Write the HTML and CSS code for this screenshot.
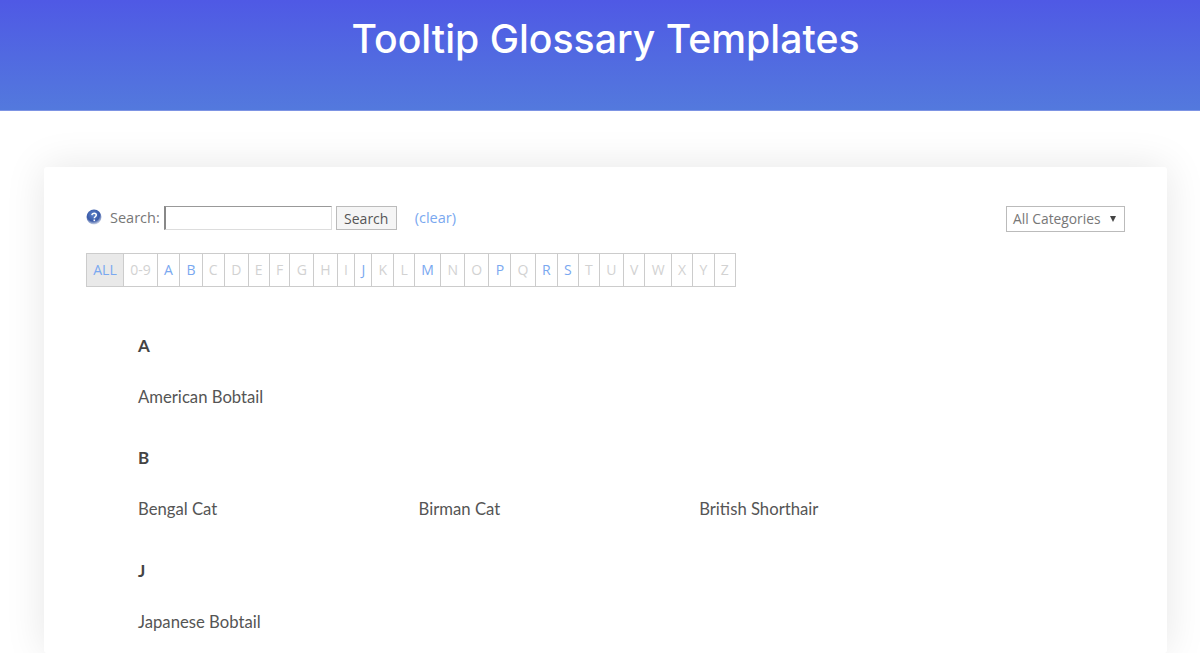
FILE: index.html
```html
<!DOCTYPE html>
<html lang="en">
<head>
  <meta charset="UTF-8">
  <title>Tooltip Glossary Templates</title>
  <link rel="stylesheet" href="styles.css">
</head>
<body>

<header class="banner">
  <h1>Tooltip Glossary Templates</h1>
</header>

<main class="card">
  <div class="toolbar">
    <form class="search">
      <svg class="help" width="16" height="16" viewBox="0 0 16 16" aria-hidden="true">
        <defs>
          <radialGradient id="helpBall" cx="45%" cy="35%" r="65%">
            <stop offset="0" stop-color="#5f86cc"/>
            <stop offset="0.65" stop-color="#3a5aa8"/>
            <stop offset="1" stop-color="#d3dae9"/>
          </radialGradient>
        </defs>
        <circle cx="8" cy="8" r="7.5" fill="url(#helpBall)"/>
        <path d="M5.8 6.2c.2-1.300 1.100-1.900 2.300-1.900 1.300 0 2.200.7 2.200 1.800 0 1.700-2 1.600-2 3.100" fill="none" stroke="#fff" stroke-width="1.500"/>
        <rect x="7.500" y="10.500" width="1.600" height="1.600" fill="#fff"/>
      </svg>
      <label class="search-label" for="q">Search:</label>
      <input class="search-input" id="q" type="text">
      <button class="search-btn" type="button">Search</button>
      <a class="clear" href="#">(clear)</a>
    </form>
    <div class="cat-select"><span class="cat-name">All Categories</span> <span class="caret"></span></div>
  </div>

  <nav class="letters">
    <span class="letter on">ALL</span>
    <span class="letter">0-9</span>
    <a class="letter has" href="#">A</a>
    <a class="letter has" href="#">B</a>
    <span class="letter">C</span>
    <span class="letter">D</span>
    <span class="letter">E</span>
    <span class="letter">F</span>
    <span class="letter">G</span>
    <span class="letter">H</span>
    <span class="letter">I</span>
    <a class="letter has" href="#">J</a>
    <span class="letter">K</span>
    <span class="letter">L</span>
    <a class="letter has" href="#">M</a>
    <span class="letter">N</span>
    <span class="letter">O</span>
    <a class="letter has" href="#">P</a>
    <span class="letter">Q</span>
    <a class="letter has" href="#">R</a>
    <a class="letter has" href="#">S</a>
    <span class="letter">T</span>
    <span class="letter">U</span>
    <span class="letter">V</span>
    <span class="letter">W</span>
    <span class="letter">X</span>
    <span class="letter">Y</span>
    <span class="letter">Z</span>
  </nav>

  <section class="group">
    <h2>A</h2>
    <div class="terms">
      <a href="#">American Bobtail</a>
    </div>
  </section>

  <section class="group group-b">
    <h2>B</h2>
    <div class="terms">
      <a href="#">Bengal Cat</a>
      <a href="#">Birman Cat</a>
      <a href="#">British Shorthair</a>
    </div>
  </section>

  <section class="group group-j">
    <h2>J</h2>
    <div class="terms">
      <a href="#">Japanese Bobtail</a>
    </div>
  </section>
</main>

</body>
</html>
```

FILE: styles.css
```css
html, body {
  height: 653px;
  overflow: hidden;
}
body {
  margin: 0;
  background: #fff;
  font-family: "Lato", sans-serif;
  color: #444;
}
.banner {
  height: 111px;
  background: linear-gradient(180deg, #4f59e5, #5379dd);
  border-bottom: 1px solid #7d94e4;
  box-sizing: border-box;
  text-align: center;
}
.banner h1 {
  margin: 0;
  padding: 14px 0 0 11px;
  font-family: "Inter", sans-serif;
  font-size: 39.2px;
  line-height: 50px;
  font-weight: 500;
  color: #fff;
}
.card {
  box-sizing: border-box;
  margin: 56px 33px 0 44px;
  padding: 39px 42px 0;
  height: 486px;
  background: #fff;
  box-shadow: 0 0 40px rgba(0,0,0,0.10);
  border-radius: 3px;
}
.toolbar {
  display: flex;
  justify-content: space-between;
  align-items: flex-start;
  font-family: "Open Sans", sans-serif;
}
.search {
  display: flex;
  align-items: center;
  height: 24px;
  font-size: 14.5px;
  line-height: 22px;
  color: #777;
}
.help {
  margin-right: 8px;
  margin-top: -3px;
}
.search-label {
  margin-right: 4px;
  padding-bottom: 1px;
}
.search-input {
  box-sizing: border-box;
  width: 168px;
  height: 24px;
  padding: 0 2px;
  border: 1px solid #ddd;
  border-top-color: #999;
  border-left: 2px solid #888;
  background: #fff;
}
.search-btn {
  box-sizing: border-box;
  width: 61px;
  height: 24px;
  margin-left: 4px;
  padding: 0;
  border: 1px solid #bbb;
  background: #f5f5f5;
  font: 14px "Open Sans", sans-serif;
  color: #555;
}
.clear {
  margin-left: 18px;
  padding-bottom: 1px;
  color: #7aa8f0;
  text-decoration: none;
}
.cat-select {
  box-sizing: border-box;
  display: flex;
  align-items: center;
  justify-content: space-between;
  width: 119px;
  height: 26px;
  padding: 0 8px 0 6px;
  border: 1px solid #bbb;
  font-size: 13.8px;
  color: #777;
}
.cat-name {
  padding-bottom: 2px;
}
.caret {
  border-left: 3.500px solid transparent;
  border-right: 3.500px solid transparent;
  border-top: 6px solid #444;
}
.letters {
  display: flex;
  width: max-content;
  margin-top: 21px;
  border: 1px solid #ccc;
  border-right: 0;
  font-family: "Open Sans", sans-serif;
  font-size: 14px;
  line-height: 32px;
}
.letter {
  padding: 0 6.22px;
  border-right: 1px solid #ccc;
  color: #d2d2d2;
  text-decoration: none;
}
.letter.has {
  color: #7aa8f0;
}
.letter.on {
  background: #e9e9e9;
  color: #7aa8f0;
}
.group {
  margin: 0 52px;
}
.group h2 {
  margin: 0;
  padding-top: 49px;
  font-size: 17px;
  line-height: 20px;
  font-weight: 700;
  color: #444;
}
.terms {
  display: grid;
  grid-template-columns: repeat(3, 280.6px);
  margin-top: 31px;
  font-size: 16.7px;
  line-height: 21px;
}
.terms a {
  color: #555;
  text-decoration: none;
}
.group-b h2 {
  padding-top: 40px;
}
.group-j h2 {
  padding-top: 41px;
}
```
